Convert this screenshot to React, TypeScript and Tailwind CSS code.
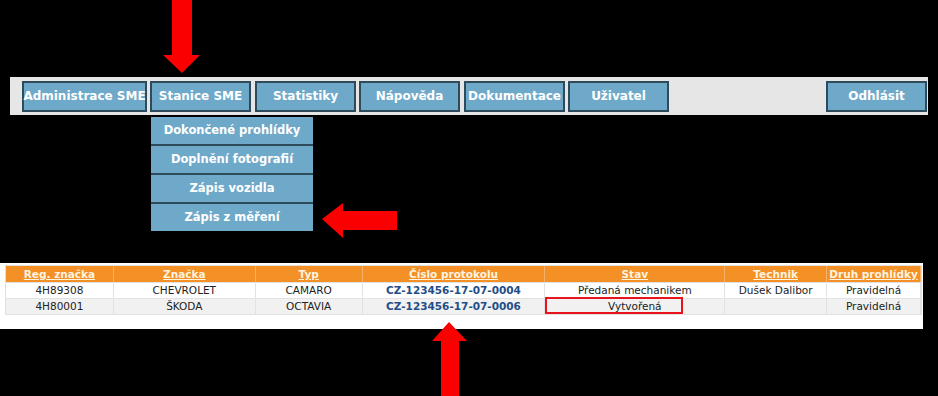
import React from "react";

const navBtn =
  "h-[31px] flex items-center justify-center bg-[#6fa9c9] border-2 border-[#2e4b5b] text-white font-bold text-[12px] whitespace-nowrap";

const menuItem =
  "h-[27px] flex items-center justify-center bg-[#6fa9c9] text-white font-bold text-[11.5px] whitespace-nowrap";

const cols = [
  { w: "w-[108px]", h: "Reg. značka" },
  { w: "w-[142px]", h: "Značka" },
  { w: "w-[107px]", h: "Typ" },
  { w: "w-[183px]", h: "Číslo protokolu" },
  { w: "w-[180px]", h: "Stav" },
  { w: "w-[102px]", h: "Technik" },
  { w: "w-[94px]", h: "Druh prohlídky" },
];

const rows = [
  ["4H89308", "CHEVROLET", "CAMARO", "CZ-123456-17-07-0004", "Předaná mechanikem", "Dušek Dalibor", "Pravidelná"],
  ["4H80001", "ŠKODA", "OCTAVIA", "CZ-123456-17-07-0006", "Vytvořená", "", "Pravidelná"],
];

export default function App() {
  return (
    <div
      className="relative w-[938px] h-[396px] bg-black overflow-hidden"
      style={{ fontFamily: '"DejaVu Sans", Verdana, sans-serif' }}
    >
      <div className="h-[77px]" />
      {/* nav bar */}
      <div className="ml-[10px] w-[918px] h-[38px] bg-[#e6e6e6] flex items-center pl-[12px] pr-[1px]">
        <div className={`${navBtn} w-[125px]`}>Administrace SME</div>
        <div className={`${navBtn} w-[101px] ml-[3px]`}>Stanice SME</div>
        <div className={`${navBtn} w-[101px] ml-[4px]`}>Statistiky</div>
        <div className={`${navBtn} w-[101px] ml-[3px]`}>Nápověda</div>
        <div className={`${navBtn} w-[101px] ml-[4px]`}>Dokumentace</div>
        <div className={`${navBtn} w-[101px] ml-[3px]`}>Uživatel</div>
        <div className={`${navBtn} w-[101px] ml-auto`}>Odhlásit</div>
      </div>
      {/* dropdown */}
      <div className="ml-[151px] mt-[2px] w-[162px] flex flex-col gap-[2px] bg-[#2e4b5b]">
        <div className={menuItem}>Dokončené prohlídky</div>
        <div className={menuItem}>Doplnění fotografií</div>
        <div className={menuItem}>Zápis vozidla</div>
        <div className={menuItem}>Zápis z měření</div>
      </div>
      {/* table area */}
      <div className="mt-[32px] w-[923px] h-[66px] bg-white pt-[2px] pl-[5px]">
        <div className="flex flex-col border border-[#e0e0e0] w-[917px] text-[10.5px] leading-none">
          <div className="flex h-[16px] bg-[#f39026]">
            {cols.map((c, i) => (
              <div
                key={i}
                className={`${c.w} flex items-center justify-center font-bold underline text-[#fff4e0] border-r border-[#f6b06a] whitespace-nowrap`}
              >
                {c.h}
              </div>
            ))}
          </div>
          {rows.map((r, ri) => (
            <div
              key={ri}
              className={`flex h-[16px] border-t border-[#e2e2e2] ${ri === 1 ? "bg-[#f1f1f1]" : "bg-white"}`}
            >
              {r.map((v, ci) => (
                <div
                  key={ci}
                  className={`${cols[ci].w} flex items-center justify-center border-r border-[#e2e2e2] whitespace-nowrap ${
                    ci === 3 ? "font-bold text-[#1f4e8a]" : "text-[#222]"
                  }`}
                >
                  {v}
                </div>
              ))}
            </div>
          ))}
        </div>
      </div>

      {/* red box annotation */}
      <div className="absolute left-[545px] top-[297px] w-[138px] h-[17px] border-2 border-[#e8131b]" />

      {/* arrows */}
      <svg className="absolute left-0 top-0" width="938" height="396">
        <polygon
          points="172,0 192,0 192,55 200,55 182,73 163,55 172,55"
          fill="#fa0000"
        />
        <polygon
          points="322,219 343,203 343,211 397,211 397,230 343,230 343,238"
          fill="#fa0000"
        />
        <polygon
          points="449,322 467,341 459,341 459,396 441,396 441,341 432,341"
          fill="#fa0000"
        />
      </svg>
    </div>
  );
}
